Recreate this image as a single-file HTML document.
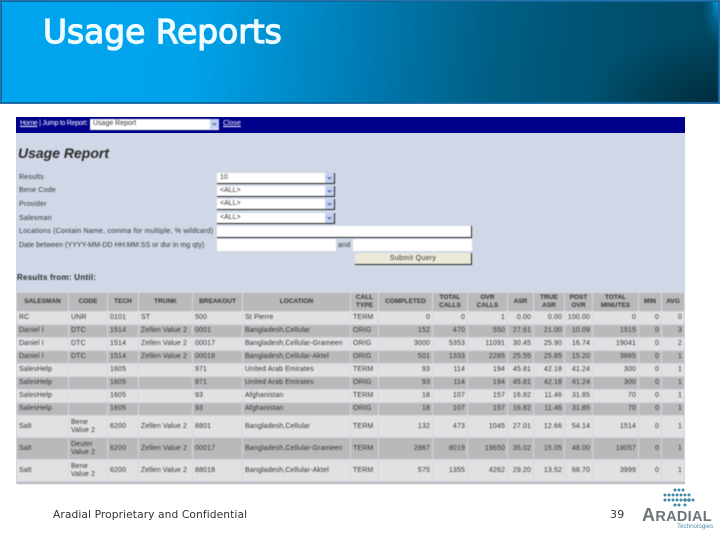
<!DOCTYPE html>
<html><head><meta charset="utf-8"><style>
html,body{margin:0;padding:0;background:#fff}
body{width:720px;height:540px;position:relative;overflow:hidden;font-family:"Liberation Sans",sans-serif}
.a{position:absolute}
#hd{left:0;top:0;width:718px;height:102px;border:1px solid #2a6fa8;box-shadow:inset 0 0 0 1px #0a6aa0;
background:radial-gradient(ellipse 16px 45px at 100% 0,#00a4ee 0,rgba(0,130,190,.45) 50%,rgba(0,80,110,0) 100%),radial-gradient(ellipse 130px 70px at 100% 100%,rgba(0,35,48,.75) 0,rgba(0,50,70,0) 100%),linear-gradient(96deg,#00a5f0 0,#00a2ea 27%,#007cb4 50%,#005f85 68%,#00506e 85%,#004862 100%)}
#t{left:43px;top:12px;font:400 33px/40px "DejaVu Sans",sans-serif;color:#eefcff;-webkit-text-stroke:1.25px #eefcff;white-space:nowrap;transform-origin:0 0;transform:scaleX(.995)}
#p{left:16px;top:117px;width:669px;height:367px;background:#d0d8e8}
#n{left:16px;top:117px;width:669px;height:16px;background:#00008b}
.w{filter:blur(.4px)}
.l{font-size:7px;line-height:10px;color:#333;left:19px;white-space:nowrap;letter-spacing:.22px}
.s{background:#fff;border-right:1px solid #222;border-bottom:1px solid #222;box-sizing:border-box;height:11px;font-size:7px;line-height:10px;color:#333;padding-left:3px}
.s:after{content:"";position:absolute;right:0;top:0;width:9px;height:10px;background:#c3d0f0}
.s:before{content:"";position:absolute;right:3px;top:3px;width:2px;height:2px;border-right:1px solid #4a5fa0;border-bottom:1px solid #4a5fa0;transform:rotate(45deg);z-index:1}
.i{background:#fff;box-sizing:border-box}
table{position:absolute;left:16px;top:292px;border-collapse:separate;border-spacing:1px;table-layout:fixed;width:669px;font-size:7px;line-height:8px;color:#333;letter-spacing:.13px}
td,th{padding:0 2px;overflow:hidden;white-space:nowrap}
th{background:#b9b9b9;font-weight:700;text-align:center;height:18px;color:#333;font-size:6.5px;letter-spacing:0}
tr{height:12px}
tr.o td{background:#e1e1e1}
tr.e td{background:#b9b9b9}
td.r{text-align:right}
tr.b{height:21px}
td.v{white-space:normal}
</style></head><body>
<div class="a" id="hd"></div>
<div class="a" id="t">Usage Reports</div>
<div class="a" id="p"></div>
<div class="a" id="n"></div>
<div class="w">
<div class="a" style="left:20px;top:119px;font-size:7px;line-height:10px;color:#fff;white-space:nowrap;letter-spacing:-.3px"><u>Home</u> | Jump to Report:</div>
<div class="a s" style="left:90px;top:119px;width:129px;height:11px;border:0;">Usage Report</div>
<div class="a" style="left:223px;top:119px;font-size:7px;line-height:10px;color:#fff"><u>Close</u></div>
<div class="a" style="left:18px;top:144px;font:italic 700 14px/18px 'Liberation Sans',sans-serif;color:#2a2a2a;white-space:nowrap">Usage Report</div>
<div class="a l" style="top:173px">Results</div>
<div class="a l" style="top:186px">Bene Code</div>
<div class="a l" style="top:200px">Provider</div>
<div class="a l" style="top:214px">Salesman</div>
<div class="a l" style="top:227px">Locations (Contain Name, comma for multiple, % wildcard)</div>
<div class="a l" style="top:241px;letter-spacing:.07px">Date between (YYYY-MM-DD HH:MM:SS or dur in mg qty)</div>
<div class="a s" style="left:217px;top:173px;width:118px">10</div>
<div class="a s" style="left:217px;top:186px;width:118px">&lt;ALL&gt;</div>
<div class="a s" style="left:217px;top:199px;width:118px">&lt;ALL&gt;</div>
<div class="a s" style="left:217px;top:213px;width:118px">&lt;ALL&gt;</div>
<div class="a i" style="left:217px;top:226px;width:255px;height:12px;border-right:1px solid #222;border-bottom:1px solid #222"></div>
<div class="a i" style="left:217px;top:239px;width:119px;height:12px"></div>
<div class="a l" style="left:338px;top:241px">and</div>
<div class="a i" style="left:353px;top:239px;width:119px;height:12px"></div>
<div class="a" style="left:355px;top:253px;width:117px;height:12px;box-sizing:border-box;background:#ece9d8;border-right:1px solid #222;border-bottom:1px solid #222;font-size:7px;line-height:12px;text-align:center;color:#333;letter-spacing:.3px">Submit Query</div>
<div class="a" style="left:17px;top:273px;font:700 8px/10px 'Liberation Sans',sans-serif;color:#2a2a2a;letter-spacing:.25px;white-space:nowrap">Results from: Until:</div>
<table>
<colgroup><col style="width:51px"><col style="width:38px"><col style="width:30px"><col style="width:53px"><col style="width:49px"><col style="width:107px"><col style="width:27px"><col style="width:53px"><col style="width:34px"><col style="width:39px"><col style="width:25px"><col style="width:30px"><col style="width:27px"><col style="width:45px"><col style="width:22px"><col style="width:22px"></colgroup>
<tr><th>SALESMAN</th><th>CODE</th><th>TECH</th><th>TRUNK</th><th>BREAKOUT</th><th>LOCATION</th><th>CALL<br>TYPE</th><th>COMPLETED</th><th>TOTAL<br>CALLS</th><th>OVR<br>CALLS</th><th>ASR</th><th>TRUE<br>ASR</th><th>POST<br>OVR</th><th>TOTAL<br>MINUTES</th><th>MIN</th><th>AVG</th></tr>
<tr class="o"><td>RC</td><td>UNR</td><td>0101</td><td>ST</td><td>500</td><td>St Pierre</td><td>TERM</td><td class="r">0</td><td class="r">0</td><td class="r">1</td><td class="r">0.00</td><td class="r">0.00</td><td class="r">100.00</td><td class="r">0</td><td class="r">0</td><td class="r">0</td></tr>
<tr class="e"><td>Daniel I</td><td>DTC</td><td>1514</td><td>Zellen Value 2</td><td>0001</td><td>Bangladesh,Cellular</td><td>ORIG</td><td class="r">152</td><td class="r">470</td><td class="r">550</td><td class="r">27.61</td><td class="r">21.00</td><td class="r">10.09</td><td class="r">1515</td><td class="r">0</td><td class="r">3</td></tr>
<tr class="o"><td>Daniel I</td><td>DTC</td><td>1514</td><td>Zellen Value 2</td><td>00017</td><td>Bangladesh,Cellular-Grameen</td><td>ORIG</td><td class="r">3000</td><td class="r">5353</td><td class="r">11091</td><td class="r">30.45</td><td class="r">25.90</td><td class="r">16.74</td><td class="r">19041</td><td class="r">0</td><td class="r">2</td></tr>
<tr class="e"><td>Daniel I</td><td>DTC</td><td>1514</td><td>Zellen Value 2</td><td>00018</td><td>Bangladesh,Cellular-Aktel</td><td>ORIG</td><td class="r">501</td><td class="r">1333</td><td class="r">2285</td><td class="r">25.55</td><td class="r">25.85</td><td class="r">15.20</td><td class="r">3865</td><td class="r">0</td><td class="r">1</td></tr>
<tr class="o"><td>SalesHelp</td><td></td><td>1605</td><td></td><td>971</td><td>United Arab Emirates</td><td>TERM</td><td class="r">93</td><td class="r">114</td><td class="r">194</td><td class="r">45.81</td><td class="r">42.18</td><td class="r">41.24</td><td class="r">300</td><td class="r">0</td><td class="r">1</td></tr>
<tr class="e"><td>SalesHelp</td><td></td><td>1605</td><td></td><td>971</td><td>United Arab Emirates</td><td>ORIG</td><td class="r">93</td><td class="r">114</td><td class="r">194</td><td class="r">45.81</td><td class="r">42.18</td><td class="r">41.24</td><td class="r">300</td><td class="r">0</td><td class="r">1</td></tr>
<tr class="o"><td>SalesHelp</td><td></td><td>1605</td><td></td><td>93</td><td>Afghanistan</td><td>TERM</td><td class="r">18</td><td class="r">107</td><td class="r">157</td><td class="r">16.82</td><td class="r">11.46</td><td class="r">31.85</td><td class="r">70</td><td class="r">0</td><td class="r">1</td></tr>
<tr class="e"><td>SalesHelp</td><td></td><td>1605</td><td></td><td>93</td><td>Afghanistan</td><td>ORIG</td><td class="r">18</td><td class="r">107</td><td class="r">157</td><td class="r">16.82</td><td class="r">11.46</td><td class="r">31.85</td><td class="r">70</td><td class="r">0</td><td class="r">1</td></tr>
<tr class="o b"><td>Salt</td><td class="v">Bene Value 2</td><td>6200</td><td>Zellen Value 2</td><td>8801</td><td>Bangladesh,Cellular</td><td>TERM</td><td class="r">132</td><td class="r">473</td><td class="r">1045</td><td class="r">27.01</td><td class="r">12.66</td><td class="r">54.14</td><td class="r">1514</td><td class="r">0</td><td class="r">1</td></tr>
<tr class="e b"><td>Salt</td><td class="v">Deuter Value 2</td><td>6200</td><td>Zellen Value 2</td><td>00017</td><td>Bangladesh,Cellular-Grameen</td><td>TERM</td><td class="r">2867</td><td class="r">8019</td><td class="r">19650</td><td class="r">35.02</td><td class="r">15.05</td><td class="r">48.00</td><td class="r">19057</td><td class="r">0</td><td class="r">1</td></tr>
<tr class="o b"><td>Salt</td><td class="v">Bene Value 2</td><td>6200</td><td>Zellen Value 2</td><td>88018</td><td>Bangladesh,Cellular-Aktel</td><td>TERM</td><td class="r">575</td><td class="r">1355</td><td class="r">4262</td><td class="r">29.20</td><td class="r">13.52</td><td class="r">68.70</td><td class="r">3999</td><td class="r">0</td><td class="r">1</td></tr>
</table>
<div class="a" style="left:17px;top:482px;width:668px;height:2px;background:#b9b9b9"></div>
</div>
<div class="a" style="left:53px;top:507px;font:400 10.7px/15px 'DejaVu Sans',sans-serif;color:#333;white-space:nowrap;letter-spacing:.08px">Aradial Proprietary and Confidential</div>
<div class="a" style="left:610px;top:507px;font:400 11px/15px 'DejaVu Sans',sans-serif;color:#333;letter-spacing:.3px">39</div>
<svg class="a" style="left:660px;top:486px" width="40" height="24" viewBox="0 0 40 24">
<g fill="#3f8aa6">
<circle cx="15" cy="4" r="1.5"/><circle cx="19" cy="4" r="1.5"/><circle cx="23" cy="4" r="1.5"/>
<circle cx="5" cy="9" r="1.5"/><circle cx="9" cy="9" r="1.5"/><circle cx="13" cy="9" r="1.5"/><circle cx="17" cy="9" r="1.5"/><circle cx="21" cy="9" r="1.5"/><circle cx="25" cy="9" r="1.5"/><circle cx="29" cy="9" r="1.5"/>
<circle cx="5" cy="14" r="1.5"/><circle cx="9" cy="14" r="1.5"/><circle cx="13" cy="14" r="1.5"/><circle cx="17" cy="14" r="1.5"/><circle cx="21" cy="14" r="1.5"/><circle cx="25" cy="14" r="1.8"/><circle cx="29" cy="14" r="1.8"/><circle cx="33" cy="14" r="1.5"/>
<circle cx="15" cy="19" r="1.5"/><circle cx="19" cy="19" r="1.5"/><circle cx="25" cy="19" r="1.5"/>
</g></svg>
<div class="a" style="left:642px;top:506px;font:700 14.5px/19px 'Liberation Sans',sans-serif;color:#6d7478;white-space:nowrap;letter-spacing:.3px"><span style="font-size:18px">A</span>RADIAL</div>
<div class="a" style="left:677px;top:523px;font:400 6.2px/8px 'Liberation Sans',sans-serif;color:#4d8ea8;white-space:nowrap">Technologies</div>
</body></html>
